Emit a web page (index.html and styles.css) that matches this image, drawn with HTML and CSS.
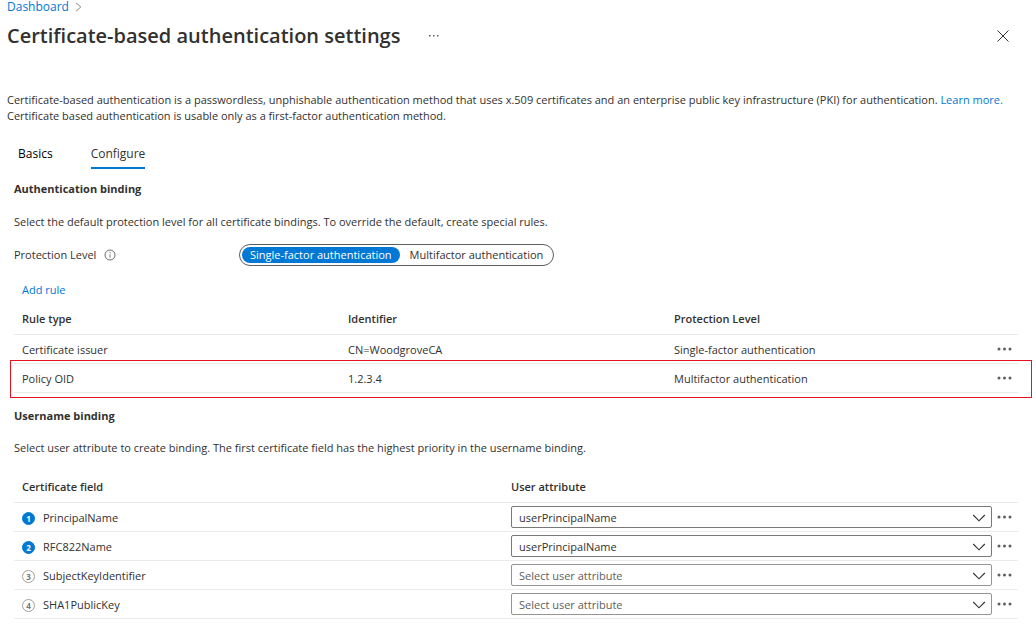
FILE: index.html
```html
<!DOCTYPE html>
<html lang="en">
<head>
<meta charset="utf-8">
<title>Certificate-based authentication settings</title>
<link rel="stylesheet" href="styles.css">
</head>
<body>
<svg class="symbols" aria-hidden="true">
  <symbol id="dots" viewBox="0 0 15 4"><circle cx="2" cy="2" r="1.5"/><circle cx="7.500" cy="2" r="1.5"/><circle cx="13" cy="2" r="1.5"/></symbol>
  <symbol id="chevron" viewBox="0 0 14 8"><path d="M1.2 1 7 6.8 12.800 1" fill="none" stroke="currentColor" stroke-width="1.1"/></symbol>
</svg>
<header class="page-header">
  <nav class="breadcrumb" aria-label="Breadcrumb">
    <a href="#">Dashboard</a>
    <svg class="crumb-arrow" viewBox="0 0 7 10" aria-hidden="true"><path d="M1 .8 5.800 5 1 9.200" fill="none" stroke="currentColor"/></svg>
  </nav>
  <div class="title-row">
    <h1>Certificate-based authentication settings</h1>
    <button class="icon-button title-more" aria-label="More options"><svg viewBox="0 0 10 2"><path d="M0 0h1.500v1.500H0zM4 0h1.500v1.500H4zM8 0h1.500v1.500H8z"/></svg></button>
    <button class="icon-button close" aria-label="Close"><svg viewBox="0 0 12 12"><path d="M.5.5l11 11M11.500.5l-11 11" fill="none" stroke="currentColor"/></svg></button>
  </div>
</header>
<main>
  <p class="intro">Certificate-based authentication is a passwordless, unphishable authentication method that uses x.509 certificates and an enterprise public key infrastructure (PKI) for authentication. <a href="#">Learn more.</a><br>Certificate based authentication is usable only as a first-factor authentication method.</p>
  <div class="tabs" role="tablist">
    <button role="tab" aria-selected="false">Basics</button>
    <button role="tab" aria-selected="true">Configure</button>
  </div>
  <section class="panel">
    <h2>Authentication binding</h2>
    <p class="description">Select the default protection level for all certificate bindings. To override the default, create special rules.</p>
    <div class="protection">
      <div class="protection-label"><span id="level-label">Protection Level</span>
        <svg class="info" viewBox="0 0 12 12" aria-hidden="true"><circle cx="6" cy="6" r="5" fill="none" stroke="currentColor" stroke-width=".9"/><path d="M5.600 5.200h.8v3.500h-.8zM5.500 3.200h1v1h-1z"/></svg>
      </div>
      <div class="pill" role="radiogroup" aria-labelledby="level-label">
        <label><input type="radio" name="level" checked><span>Single-factor authentication</span></label>
        <label><input type="radio" name="level"><span>Multifactor authentication</span></label>
      </div>
    </div>
    <a class="add-rule" href="#">Add rule</a>
    <table class="rules">
      <thead><tr><th>Rule type</th><th>Identifier</th><th>Protection Level</th><th class="actions"></th></tr></thead>
      <tbody>
        <tr><td>Certificate issuer</td><td>CN=WoodgroveCA</td><td>Single-factor authentication</td><td class="actions"><button class="icon-button more" aria-label="Certificate issuer actions"><svg><use href="#dots"/></svg></button></td></tr>
        <tr class="highlighted"><td>Policy OID</td><td>1.2.3.4</td><td>Multifactor authentication</td><td class="actions"><button class="icon-button more" aria-label="Policy OID actions"><svg><use href="#dots"/></svg></button></td></tr>
      </tbody>
    </table>
  </section>
  <section class="panel username">
    <h2>Username binding</h2>
    <p class="description">Select user attribute to create binding. The first certificate field has the highest priority in the username binding.</p>
    <table class="bindings">
      <thead><tr><th>Certificate field</th><th>User attribute</th><th class="actions"></th></tr></thead>
      <tbody>
        <tr><td><label class="field" for="a1"><span class="badge set">1</span>PrincipalName</label></td><td class="attribute"><div class="dropdown"><select id="a1"><option>userPrincipalName</option></select><svg><use href="#chevron"/></svg></div></td><td class="actions"><button class="icon-button more" aria-label="PrincipalName actions"><svg><use href="#dots"/></svg></button></td></tr>
        <tr><td><label class="field" for="a2"><span class="badge set">2</span>RFC822Name</label></td><td class="attribute"><div class="dropdown"><select id="a2"><option>userPrincipalName</option></select><svg><use href="#chevron"/></svg></div></td><td class="actions"><button class="icon-button more" aria-label="RFC822Name actions"><svg><use href="#dots"/></svg></button></td></tr>
        <tr><td><label class="field" for="a3"><span class="badge">3</span>SubjectKeyIdentifier</label></td><td class="attribute"><div class="dropdown"><select id="a3" class="empty"><option>Select user attribute</option></select><svg><use href="#chevron"/></svg></div></td><td class="actions"><button class="icon-button more" aria-label="SubjectKeyIdentifier actions"><svg><use href="#dots"/></svg></button></td></tr>
        <tr><td><label class="field" for="a4"><span class="badge">4</span>SHA1PublicKey</label></td><td class="attribute"><div class="dropdown"><select id="a4" class="empty"><option>Select user attribute</option></select><svg><use href="#chevron"/></svg></div></td><td class="actions"><button class="icon-button more" aria-label="SHA1PublicKey actions"><svg><use href="#dots"/></svg></button></td></tr>
      </tbody>
    </table>
  </section>
</main>
</body>
</html>
```
FILE: styles.css
```css
* { box-sizing: border-box; }
body {
  margin: 0;
  background: #fff;
  color: #323130;
  font: 11px/16px "Open Sans", "Noto Sans", sans-serif;
}
h1, h2, p { margin: 0; }
a { color: #0078d4; text-decoration: none; }
button, select { font: inherit; color: inherit; }
svg { display: block; fill: currentColor; }
.symbols { position: absolute; width: 0; height: 0; }
.icon-button { border: 0; background: none; padding: 0; display: flex; align-items: center; justify-content: center; color: #605e5c; }

.page-header { padding: 0 25px 0 7px; }
.breadcrumb { display: flex; align-items: center; gap: 6px; font-size: 12px; line-height: 14px; }
.crumb-arrow { width: 7px; height: 10px; color: #8a8886; }
.title-row { display: flex; align-items: center; padding-top: 6px; }
h1 { font-size: 20px; line-height: 32px; font-weight: 600; }
.title-more { width: 24px; height: 24px; margin-left: 22px; }
.title-more svg { width: 10px; height: 2px; }
.close { width: 16px; height: 16px; margin-left: auto; color: #323130; }
.close svg { width: 12px; height: 12px; }

.intro { padding: 40px 7px 0; }
.tabs { display: flex; gap: 38px; padding: 21px 18px 0; }
.tabs button { border: 0; border-bottom: 2px solid transparent; background: none; padding: 0 0 4px; line-height: 18px; font-size: 12px; font-weight: 500; color: #000; }
.tabs button[aria-selected="true"] { border-color: #0078d4; color: #323130; }

.panel { padding: 12px 18px 0 14px; }
h2 { font-size: 11px; line-height: 16px; font-weight: 700; }
.description { padding-top: 17px; }
.protection { display: flex; align-items: center; padding-top: 14px; }
.protection-label { display: flex; align-items: center; gap: 8px; width: 225px; }
.info { width: 12px; height: 12px; color: #605e5c; }
.pill { display: flex; gap: 2px; border: 1px solid #605e5c; border-radius: 11px; padding: 2px; }
.pill input { position: absolute; opacity: 0; margin: 0; }
.pill span { display: block; padding: 0 8px; border-radius: 8px; line-height: 16px; }
.pill input:checked + span { background: #0078d4; color: #fff; font-weight: 500; }
.add-rule { display: inline-block; margin: 16px 8px 0; }

table { width: 100%; border-collapse: collapse; table-layout: fixed; }
th { height: 36px; padding-top: 7px; text-align: left; font-weight: 600; }
th, td { padding-left: 8px; padding-right: 8px; border-bottom: 1px solid #edebe9; }
td { height: 29px; padding-top: 2px; padding-bottom: 0; }
th.actions, td.actions { width: 26px; padding: 0; }
.more { width: 24px; height: 20px; }
.more svg { width: 15px; height: 4px; }
.highlighted { position: relative; }
.highlighted .actions::after { content: ""; position: absolute; inset: -3px -14px -6px -4px; border: 1px solid #e81123; pointer-events: none; }

.username { padding-top: 15px; }
.username .description { padding-top: 16px; }
.bindings th { height: 47px; padding-top: 17px; }
.field { display: flex; align-items: center; gap: 8px; }
.badge { width: 13px; height: 13px; border: 1px solid #a19f9d; border-radius: 50%; color: #797775; font-size: 8px; line-height: 11px; font-weight: 700; text-align: center; }
.badge.set { border-color: #0078d4; background: #0078d4; color: #fff; }
td.attribute { padding: 0 0 0 8px; }
.dropdown { position: relative; }
.dropdown select { display: block; width: 100%; height: 22px; padding: 1px 28px 0 7px; border: 1px solid #7a7876; border-radius: 2px; background: #fff; appearance: none; }
.dropdown select.empty { border-color: #979593; color: #605e5c; }
.dropdown svg { position: absolute; right: 6px; top: 8px; width: 14px; height: 8px; color: #323130; pointer-events: none; }
```
